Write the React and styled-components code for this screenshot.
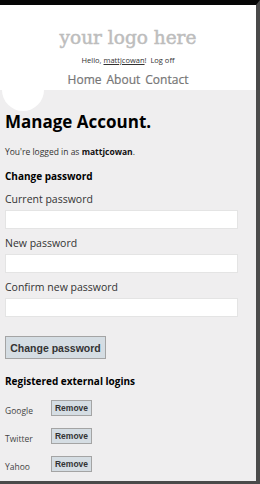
import React from "react";
import styled, { createGlobalStyle } from "styled-components";

const GlobalStyle = createGlobalStyle`
  html, body {
    margin: 0;
    padding: 0;
    background: #fff;
  }
`;

const Frame = styled.div`
  width: 260px;
  height: 484px;
  box-sizing: border-box;
  border-top: 5px solid #060606;
  border-right: 4px solid #4a4a4a;
  border-bottom: 3px solid #4a4a4a;
  display: flex;
  flex-direction: column;
  overflow: hidden;
  font-family: "Open Sans", "Noto Sans", sans-serif;
  position: relative;
`;

const Header = styled.header`
  background: #fff;
  height: 85px;
  display: flex;
  flex-direction: column;
  align-items: center;
  padding-top: 22px;
  box-sizing: border-box;
`;

const Logo = styled.div`
  font-family: "DejaVu Serif", "Liberation Serif", serif;
  font-size: 18.5px;
  color: #bdbdbd;
  -webkit-text-stroke: 0.5px #bdbdbd;
  line-height: 22px;
`;

const Login = styled.div`
  font-size: 7.5px;
  color: #333;
  margin-top: 6px;
  line-height: 10px;

  a {
    color: #333;
    text-decoration: underline;
  }
`;

const Nav = styled.nav`
  display: flex;
  gap: 5px;
  margin-top: 7px;
  font-size: 12px;
  color: #767676;
  line-height: 16px;
  -webkit-text-stroke: 0.2px #767676;
`;

const Circle = styled.div`
  position: absolute;
  left: 2px;
  top: 64px;
  width: 42px;
  height: 42px;
  border-radius: 50%;
  background: #fff;
`;

const Main = styled.main`
  flex: 1;
  background: #efeeef;
  padding: 20px 17px 0 5px;
  display: flex;
  flex-direction: column;
`;

const Title = styled.h1`
  margin: 0;
  font-size: 17px;
  font-weight: 700;
  color: #000;
  line-height: 24px;
`;

const Info = styled.p`
  margin: 12px 0 0;
  font-size: 8.5px;
  color: #333;
  line-height: 12px;

  strong {
    color: #111;
  }
`;

const Section = styled.h3`
  margin: ${(p) => p.$top || 11}px 0 0;
  font-size: 10px;
  font-weight: 700;
  color: #000;
  line-height: 14px;
`;

const Label = styled.label`
  display: block;
  margin-top: ${(p) => p.$top || 9}px;
  font-size: 10.5px;
  color: #333;
  line-height: 14px;
`;

const Input = styled.input`
  display: block;
  width: 233px;
  height: 19px;
  box-sizing: border-box;
  margin-top: 4px;
  border: 1px solid #e4e4e4;
  background: #fff;
  padding: 0;
`;

const Button = styled.button`
  align-self: flex-start;
  font-family: "Liberation Sans", Arial, sans-serif;
  font-weight: 700;
  color: #333;
  background: #d5dde3;
  border: 1px solid #a4a4a4;
  box-sizing: border-box;
  padding: 0;
  ${(p) =>
    p.$small
      ? `width: 41px; height: 16px; font-size: 8.5px;`
      : `width: 101px; height: 23px; font-size: 10.5px; margin-top: 19px;`}
`;

const LoginRow = styled.div`
  display: flex;
  align-items: center;
  margin-top: 12px;
  height: 16px;
`;

const Provider = styled.span`
  width: 46px;
  font-size: 8.5px;
  color: #444;
  padding-top: 4px;
`;

const providers = ["Google", "Twitter", "Yahoo"];

export default function App() {
  return (
    <>
      <GlobalStyle />
      <Frame>
        <Header>
          <Logo>your logo here</Logo>
          <Login>
            Hello, <a>mattjcowan</a>! &nbsp;Log off
          </Login>
          <Nav>
            <span>Home</span>
            <span>About</span>
            <span>Contact</span>
          </Nav>
        </Header>
        <Circle />
        <Main>
          <Title>Manage Account.</Title>
          <Info>
            You're logged in as <strong>mattjcowan</strong>.
          </Info>
          <Section>Change password</Section>
          <Label>Current password</Label>
          <Input type="password" />
          <Label $top={7}>New password</Label>
          <Input type="password" />
          <Label $top={7}>Confirm new password</Label>
          <Input type="password" />
          <Button>Change password</Button>
          <Section $top={15}>Registered external logins</Section>
          {providers.map((name) => (
            <LoginRow key={name}>
              <Provider>{name}</Provider>
              <Button $small>Remove</Button>
            </LoginRow>
          ))}
        </Main>
      </Frame>
    </>
  );
}
